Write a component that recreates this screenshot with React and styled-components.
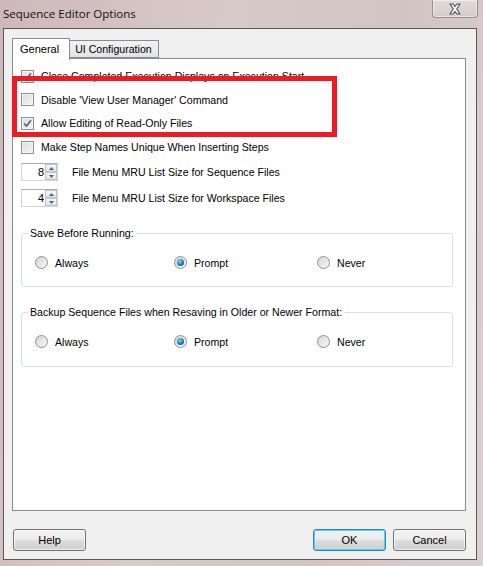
import React from "react";
import styled, { createGlobalStyle } from "styled-components";

const GlobalStyle = createGlobalStyle`
  html, body {
    margin: 0;
    padding: 0;
    background: #d6c8c8;
  }
  body {
    font-family: "Liberation Sans", Arial, sans-serif;
    font-size: 10.6px;
    color: #000;
  }
`;

const Window = styled.div`
  position: relative;
  width: 483px;
  height: 566px;
  box-sizing: border-box;
  background: linear-gradient(100deg, #cdb9b9 0%, #d9caca 40%, #d3c4c4 70%, #dccfcf 100%);
  display: flex;
  flex-direction: column;
`;

const TitleBar = styled.div`
  height: 28px;
  display: flex;
  align-items: flex-start;
  justify-content: space-between;
  padding-left: 3px;
  padding-right: 5px;
`;

const Title = styled.div`
  font-family: "Open Sans", "Noto Sans", sans-serif;
  font-size: 11.5px;
  line-height: 28px;
  color: #111;
`;

const CloseBtn = styled.div`
  width: 46px;
  height: 18px;
  box-sizing: border-box;
  border: 1px solid #9a8c8c;
  border-top: none;
  border-radius: 0 0 4px 4px;
  background: linear-gradient(#e4dada, #d6cbcb);
  box-shadow: inset 0 0 0 1px rgba(255, 255, 255, 0.5);
  display: flex;
  align-items: center;
  justify-content: center;
`;

const Client = styled.div`
  flex: 1;
  margin: 0 6px 6px 3px;
  border: 1px solid #5c5656;
  background: #f0f0f0;
  padding: 9px 10px 0 8px;
  display: flex;
  flex-direction: column;
`;

const TabStrip = styled.div`
  display: flex;
  align-items: flex-end;
  height: 20px;
  position: relative;
  z-index: 1;
`;

const Tab = styled.div`
  box-sizing: border-box;
  height: ${(p) => (p.$active ? "22px" : "18px")};
  margin-bottom: ${(p) => (p.$active ? "-2px" : "0")};
  padding: ${(p) => (p.$active ? "0 10px 0 7px" : "0 6px 0 5px")};
  border: 1px solid #898c95;
  border-bottom: ${(p) => (p.$active ? "none" : "1px solid #898c95")};
  border-left: ${(p) => (p.$active ? "1px solid #898c95" : "none")};
  background: ${(p) => (p.$active ? "#fff" : "linear-gradient(#f2f2f2, #e3e3e3)")};
  line-height: ${(p) => (p.$active ? "20px" : "17px")};
  font-size: ${(p) => (p.$active ? "11px" : "10.6px")};
`;

const Panel = styled.div`
  height: 453px;
  box-sizing: border-box;
  border: 1px solid #898c95;
  background: #fff;
  padding: 5px 12px 0 8px;
  display: flex;
  flex-direction: column;
`;

const Row = styled.div`
  height: ${(p) => p.$h || 24}px;
  display: flex;
  align-items: center;
  gap: 7px;
  white-space: nowrap;
`;

const Box = styled.div`
  width: 13px;
  height: 13px;
  box-sizing: border-box;
  border: 1px solid #8e8f8f;
  background: linear-gradient(135deg, #dcdcdc, #f6f6f6);
  box-shadow: inset 0 0 0 1px #f4f4f4;
  display: flex;
  align-items: center;
  justify-content: center;
  flex: none;
`;

const SpinRow = styled.div`
  height: 26px;
  display: flex;
  align-items: center;
  gap: 14px;
  white-space: nowrap;
`;

const Spin = styled.div`
  width: 37px;
  height: 18px;
  box-sizing: border-box;
  border: 1px solid #d5d5d5;
  border-top-color: #abadb3;
  background: #fff;
  display: flex;
  align-items: stretch;
  flex: none;
`;

const SpinValue = styled.div`
  flex: 1;
  text-align: right;
  padding-right: 1px;
  line-height: 16px;
  font-size: 11px;
`;

const SpinArrows = styled.div`
  width: 12px;
  display: flex;
  flex-direction: column;
`;

const SpinArrow = styled.div`
  flex: 1;
  box-sizing: border-box;
  border: 1px solid #c0c6cc;
  background: linear-gradient(#f6f7f8, #dfe3e8);
  display: flex;
  align-items: center;
  justify-content: center;
`;

const Group = styled.fieldset`
  margin: ${(p) => p.$top}px 0 0 0;
  padding: 0;
  height: ${(p) => p.$h}px;
  box-sizing: border-box;
  border: 1px solid #d5dfe5;
  border-radius: 3px;
`;

const Legend = styled.legend`
  margin-left: 6px;
  padding: 0 2px;
`;

const RadioLine = styled.div`
  display: grid;
  grid-template-columns: 139px 143px 1fr;
  padding: 17px 0 0 13px;
`;

const RadioItem = styled.div`
  display: flex;
  align-items: center;
  gap: 7px;
`;

const RadioDot = styled.div`
  width: 13px;
  height: 13px;
  box-sizing: border-box;
  border-radius: 50%;
  border: 1px solid #8e8f8f;
  background: linear-gradient(135deg, #d4d4d4, #f8f8f8);
  display: flex;
  align-items: center;
  justify-content: center;
  flex: none;

  &::after {
    content: "";
    display: ${(p) => (p.$on ? "block" : "none")};
    width: 7px;
    height: 7px;
    border-radius: 50%;
    background: radial-gradient(circle at 40% 35%, #8bd3f5, #1c6ea4 60%, #0e4d7d);
  }
`;

const Footer = styled.div`
  display: flex;
  align-items: center;
  margin-top: 18px;
  padding-left: 1px;
`;

const Button = styled.button`
  width: ${(p) => p.$w || 73}px;
  height: 22px;
  margin-left: ${(p) => p.$ml || 0}px;
  box-sizing: border-box;
  border: 1px solid ${(p) => (p.$default ? "#3c7fb1" : "#707070")};
  border-radius: 3px;
  background: linear-gradient(#f2f2f2 0%, #ebebeb 48%, #dddddd 52%, #cfcfcf 100%);
  box-shadow: inset 0 0 0 1px ${(p) => (p.$default ? "#48d8fb" : "rgba(255,255,255,0.7)")};
  font-family: "Liberation Sans", Arial, sans-serif;
  font-size: 11px;
  color: #000;
  padding: 0;
`;

const Spacer = styled.div`
  flex: 1;
`;

const Highlight = styled.div`
  position: absolute;
  left: 12px;
  top: 76px;
  width: 325px;
  height: 61px;
  box-sizing: border-box;
  border: 5px solid #ed1c24;
  pointer-events: none;
`;

const Check = () => (
  <svg width="9" height="9" viewBox="0 0 9 9">
    <path d="M1 4.5 L3.5 7 L8 1.2" fill="none" stroke="#4d6185" strokeWidth="1.6" />
  </svg>
);

const CheckBox = ({ checked, children, h }) => (
  <Row $h={h}>
    <Box>{checked && <Check />}</Box>
    <span>{children}</span>
  </Row>
);

const Spinner = ({ value, children }) => (
  <SpinRow>
    <Spin>
      <SpinValue>{value}</SpinValue>
      <SpinArrows>
        <SpinArrow>
          <svg width="5" height="3" viewBox="0 0 5 3">
            <path d="M0 3 L2.5 0 L5 3 Z" fill="#4d6185" />
          </svg>
        </SpinArrow>
        <SpinArrow>
          <svg width="5" height="3" viewBox="0 0 5 3">
            <path d="M0 0 L2.5 3 L5 0 Z" fill="#4d6185" />
          </svg>
        </SpinArrow>
      </SpinArrows>
    </Spin>
    <span>{children}</span>
  </SpinRow>
);

const RadioGroup = ({ label, top, h, selected }) => (
  <Group $top={top} $h={h}>
    <Legend>{label}</Legend>
    <RadioLine>
      {["Always", "Prompt", "Never"].map((o) => (
        <RadioItem key={o}>
          <RadioDot $on={o === selected} />
          <span>{o}</span>
        </RadioItem>
      ))}
    </RadioLine>
  </Group>
);

export default function App() {
  return (
    <>
      <GlobalStyle />
      <Window>
        <TitleBar>
          <Title>Sequence Editor Options</Title>
          <CloseBtn>
            <svg width="14" height="12" viewBox="0 0 14 12">
              <path
                d="M2 1 L5 1 L7 3.5 L9 1 L12 1 L8.7 6 L12 11 L9 11 L7 8.5 L5 11 L2 11 L5.3 6 Z"
                fill="#fff"
                stroke="#4a4a5a"
                strokeWidth="1.1"
                strokeLinejoin="round"
              />
            </svg>
          </CloseBtn>
        </TitleBar>
        <Client>
          <TabStrip>
            <Tab $active>General</Tab>
            <Tab>UI Configuration</Tab>
          </TabStrip>
          <Panel>
            <CheckBox checked h={24}>
              Close Completed Execution Displays on Execution Start
            </CheckBox>
            <CheckBox h={23}>Disable 'View User Manager' Command</CheckBox>
            <CheckBox checked h={24}>
              Allow Editing of Read-Only Files
            </CheckBox>
            <CheckBox h={24}>Make Step Names Unique When Inserting Steps</CheckBox>
            <Spinner value="8">File Menu MRU List Size for Sequence Files</Spinner>
            <Spinner value="4">File Menu MRU List Size for Workspace Files</Spinner>
            <RadioGroup label="Save Before Running:" top={16} h={60} selected="Prompt" />
            <RadioGroup
              label="Backup Sequence Files when Resaving in Older or Newer Format:"
              top={19}
              h={61}
              selected="Prompt"
            />
          </Panel>
          <Footer>
            <Button>Help</Button>
            <Spacer />
            <Button $default $w={73}>
              OK
            </Button>
            <Button $w={73} $ml={7}>
              Cancel
            </Button>
          </Footer>
        </Client>
        <Highlight />
      </Window>
    </>
  );
}
